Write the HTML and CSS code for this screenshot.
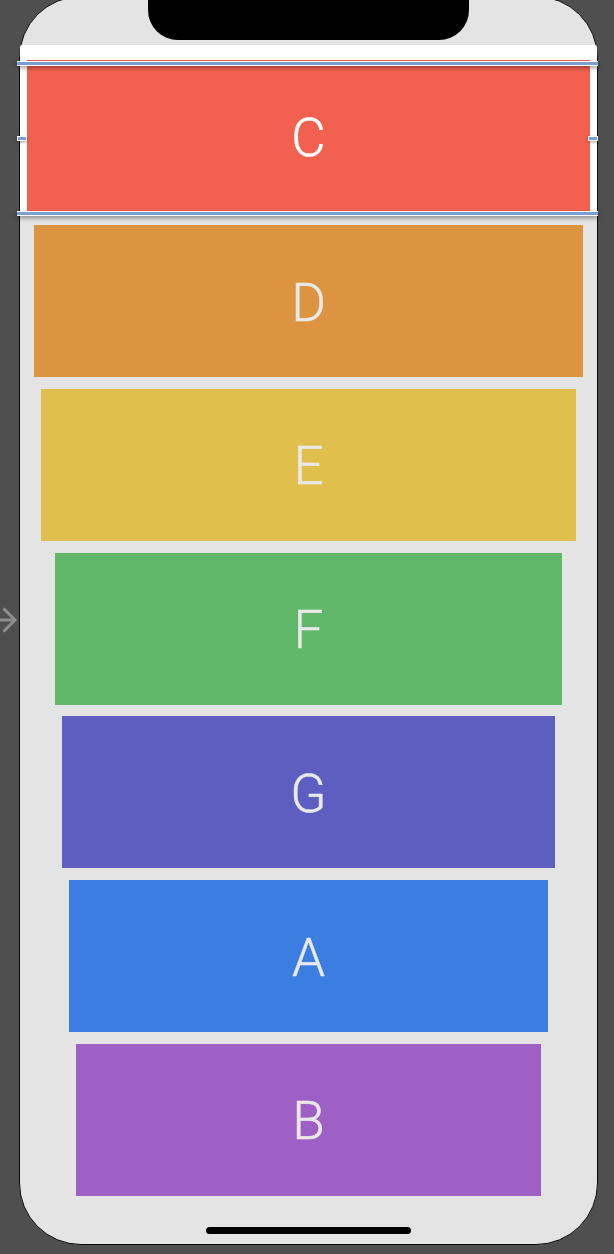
FILE: index.html
```html
<!DOCTYPE html>
<html>
<head>
<meta charset="utf-8">
<link rel="stylesheet" href="styles.css">
</head>
<body>
<svg class="entry-arrow" width="18" height="30" viewBox="0 0 18 30"><path d="M0 15H15M3.5 3.5L15 15L3.5 26.5" fill="none" stroke="#8e8e8e" stroke-width="3"/></svg>
<div class="phone">
  <div class="top-area"><div class="notch"></div></div>
  <div class="header">
    <div class="card selected c-red">
      <span class="label label-white">C</span>
      <div class="sel-line sel-top"></div>
      <div class="sel-line sel-bottom"></div>
      <div class="handle handle-left"></div>
      <div class="handle handle-right"></div>
    </div>
  </div>
  <div class="stack">
    <div class="card w-d c-orange"><span class="label">D</span></div>
    <div class="card w-e c-yellow"><span class="label">E</span></div>
    <div class="card w-f c-green"><span class="label">F</span></div>
    <div class="card w-g c-indigo"><span class="label">G</span></div>
    <div class="card w-a c-blue"><span class="label">A</span></div>
    <div class="card w-b c-purple"><span class="label">B</span></div>
  </div>
  <div class="home-indicator"></div>
</div>
</body>
</html>
```
FILE: styles.css
```css
html, body {
  margin: 0;
  padding: 0;
  background: #4f4f4f;
  width: 614px;
  height: 1254px;
  overflow: hidden;
  font-family: Roboto, "Liberation Sans", sans-serif;
}

.entry-arrow {
  position: absolute;
  left: 0;
  top: 605px;
}

.phone {
  margin: -4px 0 0 19px;
  width: 577px;
  height: 1247px;
  border: 1px solid #0a0a0a;
  border-radius: 62px;
  background: #e4e4e4;
  display: flex;
  flex-direction: column;
  align-items: center;
}

.top-area {
  width: 100%;
  height: 48px;
  display: flex;
  justify-content: center;
}

.notch {
  width: 321px;
  height: 43px;
  background: #000;
  border-radius: 0 0 30px 30px;
}

.header {
  width: 100%;
  height: 170px;
  background: #fff;
  padding-top: 15px;
  box-sizing: border-box;
  display: flex;
  justify-content: center;
  border-radius: 2px 2px 0 0;
}

.card {
  height: 152px;
  display: flex;
  align-items: center;
  justify-content: center;
  flex-shrink: 0;
  box-sizing: border-box;
  padding-top: 4px;
}

.selected {
  width: 563px;
  position: relative;
}

.label {
  font-size: 53px;
  font-weight: 300;
  color: #e9e9e9;
  line-height: 1;
  -webkit-text-stroke: 0.4px currentColor;
}

.label-white {
  color: #ffffff;
}

.sel-line {
  position: absolute;
  left: -10px;
  right: -8px;
  height: 3px;
  background: #7aa0d2;
  border-top: 1px solid #fff;
  border-bottom: 1px solid #fff;
  box-shadow: 0 2px 4px rgba(0, 0, 0, 0.4);
}

.sel-top {
  top: 1px;
}

.sel-bottom {
  top: 151px;
}

.handle {
  position: absolute;
  top: 76px;
  width: 8px;
  height: 3px;
  background: #7aa0d2;
  border: 1.5px solid #fff;
  box-shadow: 0 1px 3px rgba(0, 0, 0, 0.4);
}

.handle-left {
  left: -10px;
}

.handle-right {
  right: -8px;
}

.stack {
  margin-top: 10px;
  width: 100%;
  display: flex;
  flex-direction: column;
  align-items: center;
  gap: 11.8px;
}

.w-d { width: 549px; }
.w-e { width: 535px; }
.w-f { width: 507px; }
.w-g { width: 493px; }
.w-a { width: 479px; }
.w-b { width: 465px; }

.c-red { background: #f26150; }
.c-orange { background: #dd9441; }
.c-yellow { background: #e0bf4c; }
.c-green { background: #61b86a; }
.c-indigo { background: #5e5ec0; }
.c-blue { background: #3b7de0; }
.c-purple { background: #9f60c6; }

.home-indicator {
  margin-top: 31px;
  width: 205px;
  height: 7px;
  border-radius: 4px;
  background: #000;
}
```
